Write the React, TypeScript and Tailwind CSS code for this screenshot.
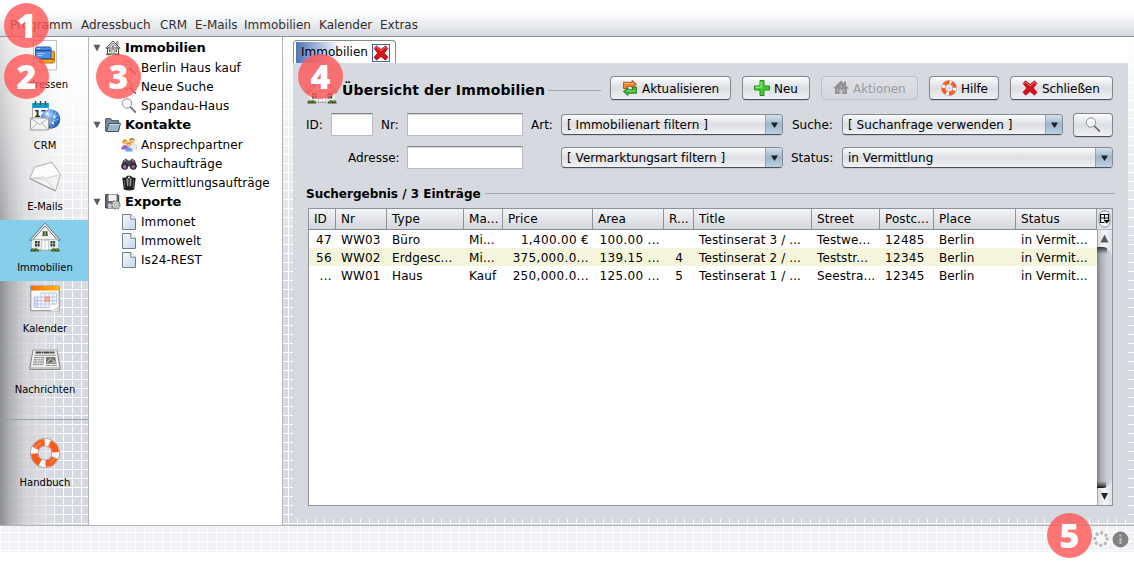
import React from 'react';

type IconProps = { size?: number; gray?: boolean };

const House = () => (
  <svg width="32" height="32" viewBox="0 0 32 32" className="shrink-0">
    <path d="M3 17h26v10H3z" fill="#eceded" />
    <path d="M5 17 16 3.500 27 17z" fill="#fbfbfb" />
    <path d="M10 12.500h12M8 14.500h16M6.500 16.500h19M4 19h24M4 21h24M4 23h24M4 25h24" stroke="#dcdcdc" strokeWidth=".5" />
    <path d="M16 1.200.8 18.200h2.500L16 4l12.700 14.200h2.500z" fill="#fff" stroke="#55585a" strokeWidth=".9" strokeLinejoin="round" />
    <path d="M4.500 17.500h23" stroke="#b3b3b3" strokeWidth=".8" />
    <path d="M13.700 9.200h4.800v3.800h-4.800z" fill="#3c4a38" />
    <path d="M13.200 13.400h5.800" stroke="#4f8a2a" strokeWidth="1.300" />
    <path d="M16.100 9v4" stroke="#fff" strokeWidth=".7" />
    <path d="M6 19h2v5.500H6zM8.600 19h2v5.500h-2zM21.500 19h2v5.500h-2zM24.100 19h2v5.500h-2z" fill="#343f33" />
    <path d="M6 21.600h4.600M21.500 21.600h4.600" stroke="#cfd5cc" strokeWidth=".6" />
    <path d="M12.800 18.300h6.600V28h-6.600z" fill="#fff" stroke="#b5b5b5" strokeWidth=".7" />
    <path d="M16.100 18.500V28" stroke="#bbb" strokeWidth=".7" />
    <path d="M11 28.500h10" stroke="#a6a6a6" strokeWidth=".9" />
    <path d="M1.500 29.500c-.5-3 2.500-4 4-2.700 1.500-1.300 4-.8 5 2.700zM21.500 29.500c1-3.500 3.500-4 5-2.700 1.500-1.300 4.500-.3 4 2.700z" fill="#39591e" />
    <path d="M3 27.500h2M7 28h2M23.500 28h2M27 27.500h2" stroke="#86a84d" strokeWidth=".9" />
  </svg>
);

const HouseSmall = ({ gray }: IconProps) =>
  gray ? (
    <svg width="16" height="16" viewBox="0 0 16 16" className="shrink-0">
      <path d="M8 .5 0 8.500h2V14h12V8.500h2L13 5.500V1.500h-2v2z" fill="#929292" />
      <path d="M6.500 9.500h3V14h-3z" fill="#c4c6ca" />
      <path d="M3.500 9.500h2v2h-2zM10.500 9.500h2v2h-2zM7 5.500h2v2H7z" fill="#aeb0b3" />
    </svg>
  ) : (
    <svg width="16" height="16" viewBox="0 0 16 16" className="shrink-0">
      <path d="M2.500 8h11v6h-11z" fill="#fff" stroke="#30402b" strokeWidth=".9" />
      <path d="M11.500 1.500H13V5h-1.500z" fill="#eee" stroke="#555" strokeWidth=".6" />
      <path d="M8 1 .8 8.200h2.200L8 3.300l5 4.900h2.200z" fill="#eee" stroke="#333" strokeWidth=".8" />
      <path d="M7.200 5.500h1.600v1.800H7.200zM4 9.300h1.600v2.700H4zM10.500 9.300h1.600v2.700h-1.600z" fill="#4d5f46" />
      <path d="M6.900 9.300h2.300V14H6.900z" fill="#fff" stroke="#555" strokeWidth=".7" />
      <path d="M1 14.500h5M10 14.500h5" stroke="#4c7b2c" strokeWidth="1.300" />
    </svg>
  );

const Lens = () => (
  <svg width="16" height="16" viewBox="0 0 16 16" className="shrink-0">
    <path d="m9.300 9 5 5" stroke="#4e4e50" strokeWidth="1.700" strokeLinecap="round" />
    <path d="m10 9.700 4 4" stroke="#bbb" strokeWidth=".5" />
    <circle cx="6" cy="5.500" r="4.700" fill="#f5f8fc" stroke="#85898f" strokeWidth=".9" />
    <path d="M3.300 5a2.800 2.800 0 0 1 2.400-2.300" stroke="#fff" fill="none" strokeWidth="1.200" />
  </svg>
);

const Cards = () => (
  <svg width="24" height="31" viewBox="0 0 24 31">
    <path d="M.5.5h23v29.500H.5z" fill="#ffffff" fillOpacity=".35" stroke="#bfbfbf" />
    <rect x="6.500" y="11" width="15" height="12" rx="1.500" fill="#f5a31d" stroke="#b97208" />
    <path d="M7 19h14" stroke="#8a570b" strokeWidth="1.500" />
    <rect x="2.500" y="7" width="15.500" height="11.500" rx="1.500" fill="#4b8df2" stroke="#285bb0" />
    <path d="M3 10.500h14.500" stroke="#1d4a99" strokeWidth="1.500" />
    <path d="M4.500 13.500h7M4.500 15.500h5" stroke="#bcd7ff" strokeWidth=".9" />
    <path d="M4 8.700h3" stroke="#f8d24a" />
  </svg>
);

const Crm = () => (
  <svg width="32" height="32" viewBox="0 0 32 32">
    <defs>
      <radialGradient id="globe" cx=".38" cy=".3" r=".75">
        <stop offset="0" stopColor="#b8dcff" />
        <stop offset=".5" stopColor="#4d8be0" />
        <stop offset="1" stopColor="#1c4ea5" />
      </radialGradient>
    </defs>
    <path d="M3.500 4h16v18h-16z" fill="#fafafa" stroke="#999" strokeWidth=".8" />
    <path d="M3.200 3h16.600v5H3.200z" fill="#139bc8" />
    <path d="M6.500 1v4M11.500 1v4M16.500 1v4" stroke="#444" strokeWidth="1.400" />
    <text x="5" y="16.500" fontSize="9.500" fontWeight="bold" fill="#222" fontFamily="DejaVu Sans">12</text>
    <circle cx="21.500" cy="19" r="9.800" fill="url(#globe)" />
    <path d="M15 13q7 2 15 3M13 20q8 3 17-1M20 10q-3 9 3 18M27 12q-4 6-2 15" fill="none" stroke="#cfe6ff" strokeWidth=".7" opacity=".7" />
    <circle cx="18" cy="13.500" r="1.200" fill="#e8f4ff" />
    <circle cx="25.500" cy="17" r="1.200" fill="#e8f4ff" />
    <circle cx="23.500" cy="23" r="1.200" fill="#e8f4ff" />
    <path d="M1.500 18h18v12h-18z" fill="#f3f3f3" stroke="#999" />
    <path d="m2 18.500 8.500 6 8.500-6M2 29.500l6.500-6.500M19 29.500 12.500 23" fill="none" stroke="#aaa" strokeWidth=".9" />
  </svg>
);

const Mail = () => (
  <svg width="34" height="32" viewBox="0 0 34 32">
    <path d="M1.800 17.500 6.500 6 24 1.200l8.500 12.300L27.500 30z" fill="#f3f3f3" stroke="#aaa" strokeWidth=".9" strokeLinejoin="round" />
    <path d="M3 16.500 7.500 7 23.500 2.200 31 13l-14.500 3.500z" fill="#fdfdfd" />
    <path d="m2 17.500 13.500-1.500q1.500 0 2 1.500L31.500 13.800" fill="none" stroke="#ccc" strokeWidth=".9" />
    <path d="m16 16 11.500 14M2 17.500l13.500.5" fill="none" stroke="#c4c4c4" strokeWidth=".8" />
    <path d="m13 17.500 4-2 3 2.500-2 2z" fill="#e2e2e2" />
    <path d="m2.500 18 25 12" stroke="#8d8d8d" strokeWidth=".9" />
  </svg>
);

const Calendar = () => (
  <svg width="30" height="28" viewBox="0 0 30 28">
    <defs>
      <linearGradient id="calTop">
        <stop offset="0" stopColor="#f96a04" />
        <stop offset="1" stopColor="#fdb913" />
      </linearGradient>
    </defs>
    <path d="M.8 1h28.400v24.700H.8z" fill="#f7f7f5" stroke="#8c8c8c" />
    <path d="M1 1h28v4.500H1z" fill="url(#calTop)" />
    <path d="M4 12h4v10H4z" fill="#d3dcf8" />
    <path d="M11 8h15.500v10.500M11 8v14.500M4 12h22.500M4 15.500h22.500M4 19h22.500M4 12v10.500h15V8M7.700 12v10.500M15 8v14.500M23 8v11" fill="none" stroke="#b9bfe6" strokeWidth=".9" />
    <path d="M15 12h4.500v4.500H15z" fill="#f7b39d" stroke="#e5866e" strokeWidth=".8" />
    <path d="M20 26c4-1 7-4 9-7v7z" fill="#d9d9d9" />
    <path d="M20 26c3-2 3-3 3-5 2 0 4-1 6-2-1 3-5 6-9 7z" fill="#fff" />
  </svg>
);

const News = () => (
  <svg width="32" height="22" viewBox="0 0 32 22">
    <path d="M4 1.200h24l3.200 17v2.300H.8v-2.300z" fill="#c6c6c4" stroke="#7d7d7d" strokeWidth=".9" />
    <path d="M4.500 1.500h23l2.500 16.500H2z" fill="#f1f1ef" />
    <path d="M6.500 3.500h19" stroke="#444" strokeWidth="2" strokeDasharray="5.500 .5 2 .4" />
    <path d="M5 6.300h22" stroke="#777" strokeWidth=".8" />
    <path d="M5 8.500h10.500M4.600 10.300H15M4.300 12.100h11M4 13.900h11M3.600 15.700h11.500M17 16.500h11" stroke="#8c8c8c" strokeWidth="1" strokeDasharray="4 .5 2 .4" />
    <path d="M17 8h9.300l1.200 7H17z" fill="#777" />
    <path d="m17.500 13 4-4 2 2 3.500 1v2.500h-9z" fill="#aaa" />
    <path d="m19 14 3-3 1.500 1.500z" fill="#3d3d3d" />
  </svg>
);

const Ring = ({ size = 30 }: IconProps) => (
  <svg width={size} height={size} viewBox="0 0 30 30" className="shrink-0">
    <circle cx="15" cy="15" r="10.700" fill="none" stroke="#8a8686" strokeWidth="8" />
    <circle cx="15" cy="15" r="10.700" fill="none" stroke="#fafafa" strokeWidth="6.900" />
    <circle cx="15" cy="15" r="10.700" fill="none" stroke="#f95b1c" strokeWidth="6.700" strokeDasharray="11.300 5.508" transform="rotate(-65 15 15)" />
    <path d="M5 10.500a11 11 0 0 1 6-5.500M25 20a11 11 0 0 1-5 4.500" stroke="#ff9a6a" strokeWidth="1.500" fill="none" opacity=".8" />
  </svg>
);

const Folder = () => (
  <svg width="16" height="16" viewBox="0 0 16 16" className="shrink-0">
    <path d="M.7 14V1.700h5l1 2h7V14z" fill="#7d92a6" stroke="#3c4c5c" />
    <path d="M1.500 14.500 4 6.500h11.500L13.300 14.500z" fill="#9db6cf" stroke="#3f5367" />
    <path d="M4.700 7.500h10" stroke="#dce7f2" strokeWidth=".8" />
  </svg>
);

const People = () => (
  <svg width="16" height="16" viewBox="0 0 16 16" className="shrink-0">
    <circle cx="11" cy="3.700" r="2.700" fill="#efb683" />
    <path d="M8.300 3.500c0-3.500 5.400-3.500 5.400 0L12 2.300z" fill="#c07a17" />
    <path d="M8 12c-.5-6 7.800-7 7.800-1v1z" fill="#eeeeea" stroke="#aaa" strokeWidth=".5" />
    <circle cx="4" cy="5" r="2.500" fill="#f1b884" />
    <path d="M1.200 6c-.5-5 5.700-5 5.300-.5L4.500 3.500z" fill="#e0a01c" />
    <path d="M.3 12.500c0-6 7.500-6 7.500 0z" fill="#9a62c4" />
    <circle cx="8" cy="8" r="2.300" fill="#f4bd8b" />
    <path d="M5.500 8c0-4 5-4 5 0L8.500 6.500z" fill="#d39320" />
    <path d="M4.300 14.500c0-5.500 7.300-5.500 7.300 0z" fill="#62a5e6" />
  </svg>
);

const Binoculars = () => (
  <svg width="16" height="16" viewBox="0 0 16 16" className="shrink-0">
    <path d="M2 4.500 5 2.500l2 2h2l2-2 3 2 2 6-4 3-3-3H7l-3 3-4-3z" fill="#4a464f" />
    <circle cx="3.700" cy="10.500" r="3.300" fill="#282530" />
    <circle cx="12.300" cy="10.500" r="3.300" fill="#282530" />
    <circle cx="3.700" cy="10.700" r="2" fill="#9a6ab0" />
    <circle cx="12.300" cy="10.700" r="2" fill="#8b5ea0" />
    <path d="M3 5.500 5 4M11 4l2 1.500" stroke="#9c9ca2" />
  </svg>
);

const Bag = () => (
  <svg width="16" height="16" viewBox="0 0 16 16" className="shrink-0">
    <path d="M1.300 3 5 2.200 6 .7h4l1 1.500 3.700.8-1.500 11.500q-5.200 1.800-10.400 0z" fill="#1f1f1f" />
    <path d="M5.700 3.500h1v7l-.7 1zM9.300 3.500h1l-.3 8-.7-1z" fill="#fff" />
    <path d="M6.700 4h2.600v6.500l-1.300 1-1.300-1z" fill="#555" />
    <path d="M7 1.800h2v1.500H7z" fill="#eee" />
    <path d="M3.300 5l.5 8M12.700 5l-.5 8" stroke="#777" strokeWidth=".7" />
  </svg>
);

const DiskGear = () => (
  <svg width="16" height="16" viewBox="0 0 16 16" className="shrink-0">
    <path d="M.7.700h12l1 1V14H.7z" fill="#696d73" stroke="#34363a" />
    <path d="M3.500.5h8v6.500h-8z" fill="#f4f4f4" />
    <path d="M3 9.500h7V14H3z" fill="#c3c6ca" />
    <circle cx="10.800" cy="10.800" r="3.900" fill="#d3d3d3" stroke="#777" strokeWidth="1.800" strokeDasharray="1.600 1.463" />
    <circle cx="10.800" cy="10.800" r="3.500" fill="#dcdcdc" stroke="#888" strokeWidth=".6" />
    <circle cx="10.800" cy="10.800" r="1.400" fill="#fff" stroke="#777" strokeWidth=".7" />
  </svg>
);

const Page = () => (
  <svg width="16" height="16" viewBox="0 0 16 16" className="shrink-0">
    <defs>
      <linearGradient id="page" x1="0" y1="0" x2="1" y2="1">
        <stop offset="0" stopColor="#f4f9ff" />
        <stop offset="1" stopColor="#c3d6ea" />
      </linearGradient>
    </defs>
    <path d="M1.500.5h8.300l4.700 4.700v10.300h-13z" fill="url(#page)" stroke="#737c87" />
    <path d="M9.800.5v4.700h4.700" fill="#fff" stroke="#737c87" />
  </svg>
);

const Cross = () => (
  <svg width="16" height="16" viewBox="0 0 16 16" className="shrink-0">
    <path d="M1 3.500 3.500.8 8 4.500 12.500.8 15 3.500 11.300 8l3.700 4.300-2.500 2.900L8 11.500l-4.500 3.700L1 12.300 4.700 8z" fill="#d4121a" stroke="#a00d12" strokeWidth=".7" />
    <path d="M2 3.500 3.500 2 8 6l4.500-4L14 3.500" fill="none" stroke="#fbb9b9" strokeWidth="1" strokeDasharray="1.500 1" />
  </svg>
);

const Plus = () => (
  <svg width="16" height="16" viewBox="0 0 16 16" className="shrink-0">
    <path d="M6 .5h4V6h5.500v4H10v5.500H6V10H.5V6H6z" fill="#3fd02e" stroke="#23871b" />
    <path d="M7.200 1.500V7.200H1.500" fill="none" stroke="#a8f59a" />
  </svg>
);

const Refresh = () => (
  <svg width="16" height="16" viewBox="0 0 16 16" className="shrink-0">
    <path d="M1.500 8.500V2.300H10V.3l4.700 4-4.700 4V6.300H5.500v2.200z" fill="#f08326" stroke="#a8441c" strokeWidth=".8" />
    <path d="M14.500 7v6.200H6v2.300l-4.700-4L6 7.700v2.100h4.500V7z" fill="#3bb530" stroke="#1e701b" strokeWidth=".8" />
    <path d="M2.500 3.500H11" stroke="#ffc489" />
    <path d="M4.500 11h9" stroke="#85e476" />
  </svg>
);

const NavItem = ({ label, icon, active }: { label: string; icon: React.ReactNode; active?: boolean }) => (
  <div className={active ? 'flex h-[61px] w-[88px] flex-col items-center bg-[#87ceeb]' : 'flex h-[61px] w-[88px] flex-col items-center'}>
    <div className="flex h-[36px] items-center justify-center pl-[2px]">{icon}</div>
    <div className="mt-[5px] flex h-[14px] items-center pl-[2px] text-[10px] leading-[14px] text-black">{label}</div>
  </div>
);

const TreeHead = ({ label, icon }: { label: string; icon: React.ReactNode }) => (
  <div className="flex h-5 items-center pb-px pl-[4px]">
    <svg width="8" height="8" viewBox="0 0 8 8" className="mr-[4px]">
      <path d="M.5.800h7L4 7.500z" fill="#5c5c5c" />
    </svg>
    {icon}
    <span className="ml-1 text-[13px] leading-[18px] font-bold tracking-[-0.1px]">{label}</span>
  </div>
);

const TreeItem = ({ label, icon }: { label: string; icon: React.ReactNode }) => (
  <div className="flex h-[19px] items-center pl-[32px]">
    {icon}
    <span className="ml-1 pt-[2px] text-[12px] leading-[17px] tracking-[0.08px]">{label}</span>
  </div>
);

const Button = ({ className, icon, label, disabled }: { className: string; icon: React.ReactNode; label?: string; disabled?: boolean }) => (
  <div
    className={
      (disabled
        ? 'border-[#bcc0c8] bg-gradient-to-b from-[#dfe1e6] to-[#d3d6dc] text-[#999ca2] '
        : 'border-[#80858f] border-b-[#4c5158] bg-gradient-to-b from-[#fdfdfe] via-[#dcdee3] to-[#eff1f4] shadow-[0_1px_0_#c0c4cc] ') +
      'flex h-6 items-center rounded-[4px] border ' +
      className
    }
  >
    {icon}
    {label && <span className="pt-[2px] pl-[4px] leading-[20px] tracking-[-0.08px]">{label}</span>}
  </div>
);

const Select = ({ className, value }: { className: string; value: string }) => (
  <div className={'flex h-[21px] overflow-hidden rounded-[4px] border border-[#858a93] border-b-[#4c5158] bg-gradient-to-b from-[#fdfdfe] via-[#dcdee3] to-[#f1f3f5] shadow-[0_1px_0_#c3c7ce] ' + className}>
    <span className="flex-1 pl-[5px] leading-[20px] tracking-[0.04px] whitespace-pre">{value}</span>
    <span className="flex w-[17px] items-center justify-center border-l border-[#8fa4b8] bg-gradient-to-b from-[#d4e0ec] via-[#9db7cd] to-[#bbd2e6]">
      <svg width="7" height="6" viewBox="0 0 7 6">
        <path d="M0 .5h7L3.500 6z" fill="#1c1f24" />
      </svg>
    </span>
  </div>
);

const Field = ({ className }: { className: string }) => (
  <div className={'h-[23px] border border-[#b9bcc3] border-t-[#83868c] bg-white shadow-[inset_0_1px_0_#d5d5d5] ' + className} />
);

const columns = 'grid grid-cols-[27px_51px_77px_39px_90px_71px_30px_118px_68px_54px_82px_81px]';
const heads = ['ID', 'Nr', 'Type', 'Ma...', 'Price', 'Area', 'R...', 'Title', 'Street', 'Postc...', 'Place', 'Status'];
const rows = [
  ['47', 'WW03', 'Büro', 'Mi...', '1,400.00 €', '100.00 ...', '', 'Testinserat 3 / ...', 'Testwe...', '12485', 'Berlin', 'in Vermit...'],
  ['56', 'WW02', 'Erdgesc...', 'Mi...', '375,000.0...', '139.15 ...', '4', 'Testinserat 2 / ...', 'Teststr...', '12345', 'Berlin', 'in Vermit...'],
  ['...', 'WW01', 'Haus', 'Kauf', '250,000.0...', '125.00 ...', '5', 'Testinserat 1 / ...', 'Seestra...', '12345', 'Berlin', 'in Vermit...'],
];
const text = 'pl-[5px] tracking-[0.12px]';
const number = 'pr-[4px] text-right tracking-[0.32px]';
const cellStyles = [number, text, text, text, number, number, 'text-center', text, text, 'pl-[5px] tracking-[0.32px]', text, text];
const menu: [string, string][] = [
  ['Programm', 'w-[71px]'],
  ['Adressbuch', 'w-[79px]'],
  ['CRM', 'w-[35px]'],
  ['E-Mails', 'w-[49px]'],
  ['Immobilien', 'w-[75px]'],
  ['Kalender', 'w-[61px]'],
  ['Extras', 'w-[45px]'],
];

const Marker = ({ n, className }: { n: number; className: string }) => (
  <div className={"absolute flex size-[45px] items-center justify-center rounded-full bg-[#ff5555]/80 pb-[2px] font-['Open_Sans',sans-serif] text-[34px] leading-none font-extrabold text-white " + className}>
    {n}
  </div>
);

const grid = 'bg-[linear-gradient(#fff_1px,transparent_1px),linear-gradient(90deg,#fff_1px,transparent_1px),linear-gradient(#fff_0px,#d6d9e1_260px)] bg-[size:9px_9px,9px_9px,100%_100%]';
const navShade =
  'bg-[linear-gradient(rgba(255,255,255,0.75)_0px,rgba(255,255,255,0.45)_100px,transparent_240px),linear-gradient(90deg,rgba(132,134,138,0.92)_0px,rgba(168,170,174,0.88)_10px,rgba(206,207,211,0.8)_24px,rgba(220,221,225,0.6)_42px,transparent_62px)]';

export default function App() {
  return (
    <div className="relative h-[562px] w-[1134px] overflow-hidden bg-white font-['DejaVu_Sans',sans-serif] text-[12px] text-black">
      <div className="flex h-[37px] items-end border-b border-[#8d929d] bg-[linear-gradient(#fff_12px,#f2f3f5_20px,#d9dce2_34px,#d6d9df_37px)] pb-px pl-[10px] text-[#303030]">
        {menu.map(([label, width]) => (
          <span key={label} className={'h-[20px] leading-[20px] whitespace-nowrap ' + width}>
            {label}
          </span>
        ))}
      </div>

      <div className={'flex h-[515px] flex-col ' + grid}>
        <div className="flex h-[488px]">
          <nav className={'flex w-[88px] shrink-0 flex-col ' + navShade}>
            <NavItem label="Adressen" icon={<Cards />} />
            <NavItem label="CRM" icon={<Crm />} />
            <NavItem label="E-Mails" icon={<Mail />} />
            <NavItem label="Immobilien" icon={<House />} active />
            <NavItem label="Kalender" icon={<Calendar />} />
            <NavItem label="Nachrichten" icon={<News />} />
            <div className="mt-[16px] mb-[15px] h-px bg-[#9ba0aa]" />
            <NavItem label="Handbuch" icon={<Ring />} />
          </nav>

          <aside className="w-[195px] shrink-0 border-x border-[#b4b6b9] bg-white pt-px">
            <TreeHead label="Immobilien" icon={<HouseSmall />} />
            <TreeItem label="Berlin Haus kauf" icon={<Lens />} />
            <TreeItem label="Neue Suche" icon={<Lens />} />
            <TreeItem label="Spandau-Haus" icon={<Lens />} />
            <TreeHead label="Kontakte" icon={<Folder />} />
            <TreeItem label="Ansprechpartner" icon={<People />} />
            <TreeItem label="Suchaufträge" icon={<Binoculars />} />
            <TreeItem label="Vermittlungsaufträge" icon={<Bag />} />
            <TreeHead label="Exporte" icon={<DiskGear />} />
            <TreeItem label="Immonet" icon={<Page />} />
            <TreeItem label="Immowelt" icon={<Page />} />
            <TreeItem label="Is24-REST" icon={<Page />} />
          </aside>

          <main className="ml-[10px] flex w-[835px] shrink-0 flex-col">
            <div className="flex h-[26px] items-end bg-white">
              <div className="flex h-[23px] w-[103px] rounded-t-[4px] border border-b-0 border-[#8b8b8b] px-[2px] pt-px">
                <div className="flex flex-1 items-center bg-[linear-gradient(90deg,#4f75b9,#fff_45px)] pl-[5px]">
                  <span className="w-[71px] pb-[2px] leading-[18px]">Immobilien</span>
                  <span className="mt-px flex h-[18px] w-[18px] items-center justify-center border border-[#3c62a8] bg-white">
                    <Cross />
                  </span>
                </div>
              </div>
            </div>

            <section className="flex h-[456px] flex-col bg-[#d6d9e0] pl-[13px]">
              <div className="flex h-[50px] pt-[13px]">
                <div className="-mt-[2px] mr-[4px]">
                  <House />
                </div>
                <h1 className="w-[206px] text-[14px] leading-[28px] font-bold tracking-[0.13px] whitespace-nowrap">Übersicht der Immobilien</h1>
                <div className="mt-[14px] mr-[9px] h-px w-[53px] bg-[#a1a5ae]" />
                <Button className="mr-[11px] w-[121px] pl-[11px]" icon={<Refresh />} label="Aktualisieren" />
                <Button className="mr-[11px] w-[68px] pl-[11px]" icon={<Plus />} label="Neu" />
                <Button className="mr-[11px] w-[97px] pl-[11px]" icon={<HouseSmall gray />} label="Aktionen" disabled />
                <Button className="mr-[11px] w-[70px] pl-[11px]" icon={<Ring size={16} />} label="Hilfe" />
                <Button className="w-[103px] pl-[11px]" icon={<Cross />} label="Schließen" />
              </div>

              <div className="flex h-[33px] items-start leading-[25px]">
                <span className="w-[25px]">ID:</span>
                <Field className="w-[42px]" />
                <span className="w-[34px] pl-[8px]">Nr:</span>
                <Field className="w-[116px]" />
                <span className="w-[38px] pl-[8px]">Art:</span>
                <Select className="mt-px w-[222px]" value="[ Immobilienart filtern ]" />
                <span className="w-[59px] pl-[9px]">Suche:</span>
                <Select className="mt-px mr-[10px] w-[221px]" value="[ Suchanfrage verwenden ]" />
                <Button className="w-[40px] justify-center" icon={<Lens />} />
              </div>
              <div className="flex h-[40px] items-start leading-[25px]">
                <span className="w-[101px] pl-[42px]">Adresse:</span>
                <Field className="w-[116px]" />
                <Select className="mt-px ml-[38px] w-[222px]" value="[ Vermarktungsart filtern ]" />
                <span className="w-[59px] pl-[8px]">Status:</span>
                <Select className="mt-px w-[271px]" value="in Vermittlung" />
              </div>

              <div className="flex h-[22px] items-start">
                <h2 className="w-[179px] font-bold whitespace-nowrap leading-[16px]">Suchergebnis / 3 Einträge</h2>
                <div className="mt-[7px] h-px w-[630px] bg-[#a1a5ae]" />
              </div>

              <div className="ml-[2px] flex h-[298px] w-[805px] border border-[#8e939e] bg-white">
                <div className="w-[788px]">
                  <div className={columns + ' h-[21px] border-b border-[#858a95] bg-gradient-to-b from-[#f4f5f7] to-[#d4d7dd]'}>
                    {heads.map((head) => (
                      <span key={head} className="border-r border-[#8f949f] pt-px pl-[5px] leading-[19px] tracking-[0.08px] whitespace-nowrap">
                        {head}
                      </span>
                    ))}
                  </div>
                  {rows.map((row, r) => (
                    <div key={r} className={columns + ' h-[18px] leading-[18px] ' + (r === 1 ? 'bg-[#f5f5dc]' : 'bg-white')}>
                      {row.map((cell, c) => (
                        <span key={c} className={'overflow-hidden pt-px leading-[18px] whitespace-nowrap ' + cellStyles[c]}>
                          {cell}
                        </span>
                      ))}
                    </div>
                  ))}
                </div>
                <div className="flex w-[15px] flex-col">
                  <div className="flex h-[21px] items-center justify-center border-b border-[#b5b8be] bg-[#e0e2e6]">
                    <svg width="13" height="18" viewBox="0 0 13 18">
                      <rect x="1" y="1" width="11" height="16" rx="5" fill="#f5f6f8" stroke="#8c919b" />
                      <path d="M2 4.500h9M2.500 4.500v8h4M2.500 8h8M6.500 4.500v5M10.500 4.500V10" stroke="#111" fill="none" strokeWidth="1.100" />
                      <path d="M5.500 10h6.500L8.800 13.500z" fill="#000" />
                    </svg>
                  </div>
                  <svg width="15" height="275" viewBox="0 0 15 275">
                    <defs>
                      <linearGradient id="track">
                        <stop offset="0" stopColor="#7c8085" />
                        <stop offset=".25" stopColor="#a9adb3" />
                        <stop offset=".65" stopColor="#c8cbcf" />
                        <stop offset="1" stopColor="#d0d3d8" />
                      </linearGradient>
                      <linearGradient id="cap">
                        <stop offset="0" stopColor="#d4d7dc" />
                        <stop offset=".5" stopColor="#f4f5f7" />
                        <stop offset="1" stopColor="#dfe2e6" />
                      </linearGradient>
                      <linearGradient id="shade" x1="0" y1="0" x2="0" y2="1">
                        <stop offset="0" stopColor="#33363a" />
                        <stop offset="1" stopColor="#33363a" stopOpacity="0" />
                      </linearGradient>
                      <linearGradient id="shadeUp" x1="0" y1="1" x2="0" y2="0">
                        <stop offset="0" stopColor="#111" />
                        <stop offset="1" stopColor="#33363a" stopOpacity="0" />
                      </linearGradient>
                    </defs>
                    <path d="M0 0h15v275H0z" fill="url(#track)" />
                    <path d="M0 17h10v7H0z" fill="url(#shade)" />
                    <path d="M0 251h9v7H0z" fill="url(#shadeUp)" />
                    <path d="M0 0h15v26c-2-6-5-9-9-9H0z" fill="url(#cap)" />
                    <path d="M0 275h15v-26c-2 6-5 9-9 9H0z" fill="url(#cap)" />
                    <path d="M3.500 12.500h8l-4-8z" fill="#55585e" />
                    <path d="M4 263h7l-3.500 7z" fill="#222529" />
                    <path d="M.5 0v17M.5 258v17" stroke="#a6a9af" />
                  </svg>
                </div>
              </div>
            </section>
          </main>
        </div>

        <footer className="flex h-[27px] items-start justify-end gap-[3px] border-t border-[#b3b5b9] bg-white/65 pt-[5px] pr-[5px]">
          <svg width="16" height="16" viewBox="0 0 16 16">
            <path d="M0 0h16v16H0z" fill="#f7f7f8" />
            <circle cx="8" cy="8" r="6.200" fill="none" stroke="#b9babd" strokeWidth="3.600" strokeLinecap="round" strokeDasharray="0 4.869" />
          </svg>
          <svg width="17" height="17" viewBox="0 0 17 17">
            <circle cx="8.500" cy="8.500" r="7.900" fill="#818181" />
            <path d="M8.500 3.500v2M8.500 7v6" stroke="#bdbdbd" strokeWidth="2.200" />
          </svg>
        </footer>
      </div>

      <Marker n={1} className="top-[3px] left-[4px]" />
      <Marker n={2} className="top-[54px] left-[4px]" />
      <Marker n={3} className="top-[54px] left-[96px]" />
      <Marker n={4} className="top-[54px] left-[298px]" />
      <Marker n={5} className="top-[513px] left-[1047px]" />
    </div>
  );
}
